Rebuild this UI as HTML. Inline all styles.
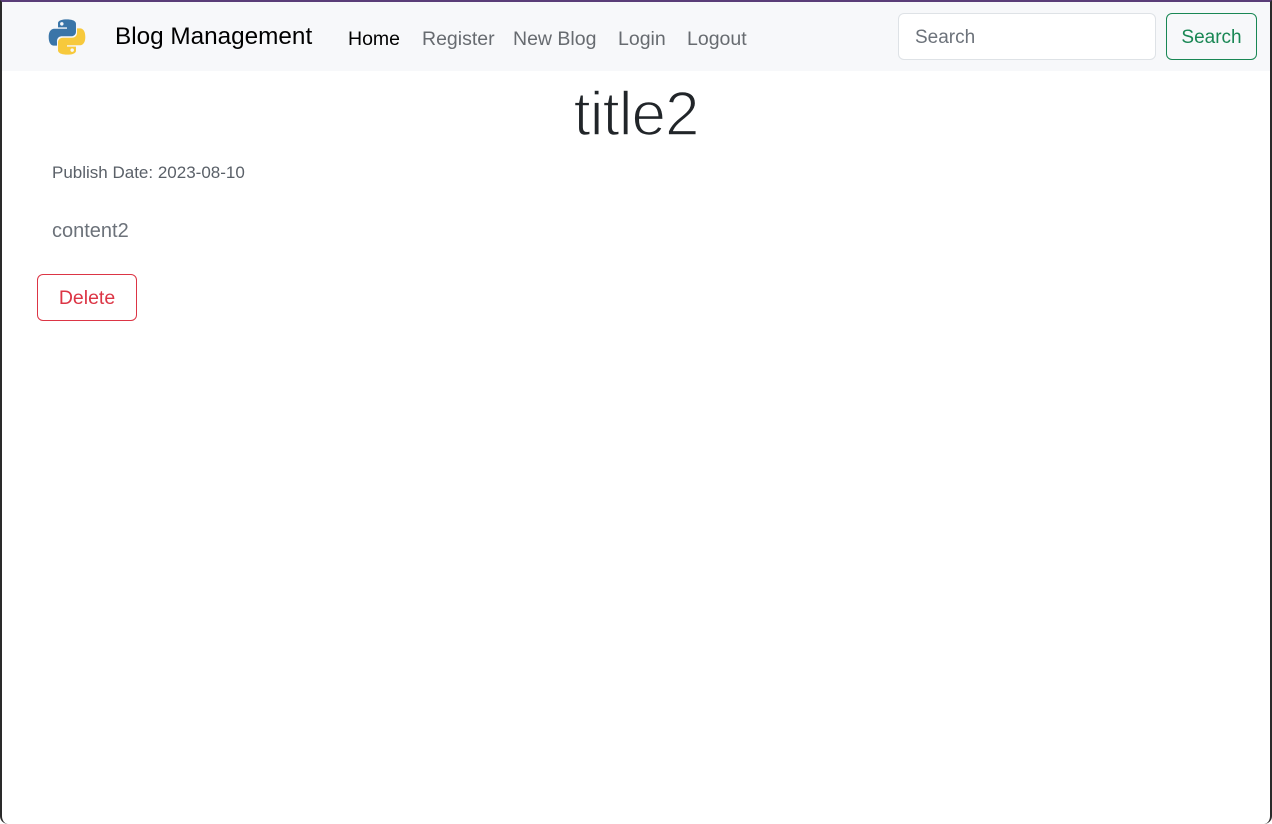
<!DOCTYPE html>
<html><head><meta charset="utf-8"><style>
html,body{margin:0;padding:0}
body{width:1272px;height:824px;overflow:hidden;background:#fff;font-family:"Liberation Sans",sans-serif;position:relative;color:#212529}
.frame{position:absolute;inset:0;border-left:2px solid #2a2a2a;border-right:2px solid #2a2a2a;border-top:2px solid #5a3d78;border-radius:0 0 8px 8px;pointer-events:none}
nav{position:absolute;left:2px;top:2px;right:2px;height:69px;background:#f7f8fa}
.brand{position:absolute;left:113px;top:21px;font-size:24.3px;color:#000}
.links a{position:absolute;top:26px;font-size:19.5px;color:#676b70;text-decoration:none}
.inp{position:absolute;border:1px solid #dee2e6;border-radius:6px;background:#fff;box-sizing:border-box;width:258px;height:47px}
.inp span{position:absolute;left:16px;top:13px;font-size:19px;color:#6c727a}
.btn{position:absolute;width:91px;height:47px;border:1px solid #198754;border-radius:6px;box-sizing:border-box;color:#198754;font-size:19px;text-align:center;line-height:47px}
h1{position:absolute;left:0;right:0;top:79px;margin:0;text-align:center;font-weight:400;font-size:62px;color:#212529;letter-spacing:-1px;-webkit-text-stroke:1.6px #fff;paint-order:normal}
.date{position:absolute;left:52px;top:163px;font-size:17px;color:#5a6068}
.content{position:absolute;left:52px;top:220px;font-size:20px;color:#6c727a}
.del{position:absolute;left:37px;top:274px;width:100px;height:47px;border:1px solid #dc3545;border-radius:6px;box-sizing:border-box;color:#dc3545;font-size:19.5px;text-align:center;line-height:47px}
</style></head><body>
<nav>
<svg style="position:absolute;left:46px;top:16px" width="38" height="38" viewBox="0 0 110 110">
<path d="M54 4c-26 0-25 11-25 11v12h26v4H19S2 29 2 55s15 25 15 25h9V68s-1-15 15-15h26s14 0 14-14V17S83 4 54 4zm-14 8a5 5 0 1 1 0 10a5 5 0 0 1 0-10z" fill="#3a75a8"/>
<path d="M56 106c26 0 25-11 25-11V83H55v-4h36s17 2 17-24-15-25-15-25h-9v12s1 15-15 15H43s-14 0-14 14v22s-2 13 27 13zm14-8a5 5 0 1 1 0-10a5 5 0 0 1 0 10z" fill="#f7c93c"/>
</svg>
<div class="brand">Blog Management</div>
<div class="links">
<a style="left:346px;color:#000">Home</a>
<a style="left:420px">Register</a>
<a style="left:511px">New Blog</a>
<a style="left:616px">Login</a>
<a style="left:685px">Logout</a>
</div>
<div class="inp" style="left:896px;top:11px"><span>Search</span></div>
<div class="btn" style="left:1164px;top:11px">Search</div>
</nav>
<h1>title2</h1>
<div class="date">Publish Date: 2023-08-10</div>
<div class="content">content2</div>
<div class="del">Delete</div>
<div class="frame"></div>
</body></html>
